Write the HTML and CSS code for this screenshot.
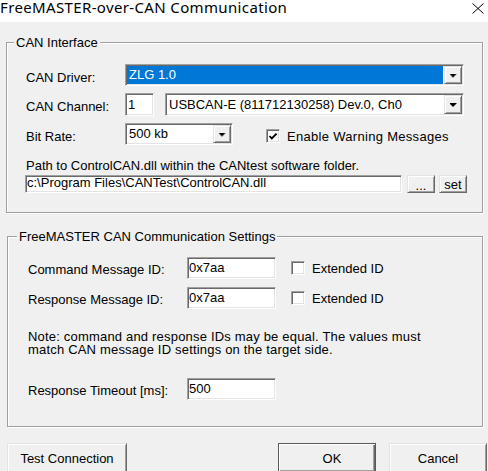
FILE: index.html
```html
<!DOCTYPE html>
<html>
<head>
<meta charset="utf-8">
<title>FreeMASTER-over-CAN Communication</title>
<link rel="stylesheet" href="styles.css">
</head>
<body>
<div class="window">
  <header class="titlebar">
    <span class="title">FreeMASTER-over-CAN Communication</span>
    <svg class="close" width="12" height="11" viewBox="0 0 12 11"><path d="M0.5 0.5 L11.5 10.5 M11.5 0.5 L0.5 10.5" stroke="#000" stroke-width="1" fill="none"/></svg>
  </header>

  <main class="content">
    <fieldset class="group g1">
      <legend>CAN Interface</legend>
      <div class="gbody">
        <div class="row r-driver">
          <span class="lbl">CAN Driver:</span>
          <div class="combo sunken combo-driver sel">
            <span class="field">ZLG 1.0</span>
            <span class="ddbtn raised"><i class="arrow"></i></span>
          </div>
        </div>
        <div class="row r-channel">
          <span class="lbl">CAN Channel:</span>
          <div class="edit sunken edit-ch">1</div>
          <div class="combo sunken combo-dev">
            <span class="field">USBCAN-E (811712130258) Dev.0, Ch0</span>
            <span class="ddbtn raised"><i class="arrow"></i></span>
          </div>
        </div>
        <div class="row r-bit">
          <span class="lbl">Bit Rate:</span>
          <div class="combo sunken combo-bit">
            <span class="field">500 kb</span>
            <span class="ddbtn raised"><i class="arrow"></i></span>
          </div>
          <span class="check sunken checked"><svg width="8" height="7" viewBox="0 0 8 7"><path d="M0.5 3 L2.8 5.4 L7.5 0.6" stroke="#000" stroke-width="1.8" fill="none"/></svg></span>
          <span class="chklbl chk-warn">Enable Warning Messages</span>
        </div>
        <div class="path-label">Path to ControlCAN.dll within the CANtest software folder.</div>
        <div class="row r-path">
          <div class="edit sunken edit-path">c:\Program Files\CANTest\ControlCAN.dll</div>
          <button class="btn raised btn-browse">...</button>
          <button class="btn raised btn-set">set</button>
        </div>
      </div>
    </fieldset>

    <fieldset class="group g2">
      <legend>FreeMASTER CAN Communication Settings</legend>
      <div class="gbody">
        <div class="row r-cmd">
          <span class="lbl">Command Message ID:</span>
          <div class="edit sunken edit-id">0x7aa</div>
          <span class="check sunken"></span>
          <span class="chklbl">Extended ID</span>
        </div>
        <div class="row r-resp">
          <span class="lbl">Response Message ID:</span>
          <div class="edit sunken edit-id">0x7aa</div>
          <span class="check sunken"></span>
          <span class="chklbl">Extended ID</span>
        </div>
        <p class="note">Note: command and response IDs may be equal. The values must<br>match CAN message ID settings on the target side.</p>
        <div class="row r-timeout">
          <span class="lbl">Response Timeout [ms]:</span>
          <div class="edit sunken edit-id">500</div>
        </div>
      </div>
    </fieldset>

    <div class="actions">
      <button class="btn raised btn-big btn-test">Test Connection</button>
      <button class="btn raised btn-big btn-ok">OK</button>
      <button class="btn raised btn-big btn-cancel">Cancel</button>
    </div>
  </main>
</div>
</body>
</html>
```
FILE: styles.css
```css
* { box-sizing: border-box; }
html, body { margin: 0; padding: 0; }
body {
  width: 488px;
  height: 471px;
  overflow: hidden;
  background: #f0f0f0;
  font-family: "Liberation Sans", Arial, sans-serif;
  font-size: 13px;
  color: #000;
}

.titlebar {
  height: 22px;
  background: #fff;
  display: flex;
  justify-content: space-between;
  align-items: flex-start;
}
.title {
  font-family: "Noto Sans", sans-serif;
  font-size: 15px;
  line-height: 17px;
  margin-top: -1px;
  letter-spacing: 0.36px;
  white-space: nowrap;
}
.close { margin: 3px 4px 0 0; display: block; }

/* group boxes (etched frame) */
.group {
  margin: 0;
  padding: 0;
  min-width: 0;
  border: 1px solid #a0a0a0;
  box-shadow: 1px 1px 0 #fff, inset 1px 1px 0 #fff;
}
.group legend {
  padding: 0 2px;
  line-height: 13px;
  background: #f0f0f0;
}
.g1 { margin: 14px 0 0 6px; width: 477px; }
.g1 legend { margin-left: 7px; }
.g1 .gbody { padding: 15px 0 19px 19px; }

.g2 { margin: 17px 0 0 7px; width: 476px; }
.g2 legend { margin-left: 9px; }
.g2 .gbody { padding: 14px 0 26px 20px; }

.row { display: flex; align-items: flex-start; }
.lbl { line-height: 15px; padding-top: 6px; white-space: nowrap; }
.g1 .lbl { width: 99px; }
.g2 .lbl { width: 159px; padding-top: 5px; }

/* 3D borders */
.sunken {
  background: #fff;
  border: 1px solid;
  border-color: #a0a0a0 #fff #fff #a0a0a0;
  box-shadow: inset 1px 1px 0 #696969, inset -1px -1px 0 #e3e3e3;
}
.raised {
  background: #f0f0f0;
  border: 1px solid;
  border-color: #e3e3e3 #696969 #696969 #e3e3e3;
  box-shadow: inset 1px 1px 0 #fff, inset -1px -1px 0 #a0a0a0;
}

/* combo boxes */
.combo { display: flex; height: 22px; padding: 1px; }
.field {
  flex: 1;
  padding-left: 2px;
  line-height: 18px;
  white-space: nowrap;
  overflow: hidden;
}
.sel .field { background: #0078d7; color: #fff; margin-right: 1px; }
.ddbtn {
  width: 18px;
  display: flex;
  align-items: center;
  justify-content: center;
}
.arrow {
  display: block;
  width: 7px;
  height: 4px;
  background: #000;
  clip-path: polygon(0 0, 7px 0, 7px 1px, 6px 1px, 6px 2px, 5px 2px, 5px 3px, 4px 3px, 4px 4px, 3px 4px, 3px 3px, 2px 3px, 2px 2px, 1px 2px, 1px 1px, 0 1px);
  margin-top: 1px;
}
.combo-driver { width: 339px; }
.r-channel { margin-top: 7px; }
.combo-dev { width: 299px; height: 23px; margin-left: 11px; }
.combo-dev .field { line-height: 19px; }
.r-bit { margin-top: 7px; }
.combo-bit { width: 108px; }

/* edits */
.edit { padding: 1px; white-space: nowrap; overflow: hidden; }
.edit-ch { width: 29px; height: 23px; line-height: 19px; padding-left: 2px; }
.edit-id { width: 89px; height: 22px; line-height: 18px; }
.edit-path { width: 377px; height: 18px; line-height: 11px; margin-left: -1px; }

/* check boxes */
.check {
  width: 14px;
  height: 14px;
  display: flex;
  align-items: center;
  justify-content: center;
}
.r-bit .check { margin: 6px 0 0 33px; }
.chklbl { line-height: 15px; padding-top: 6px; margin-left: 7px; white-space: nowrap; }
.chk-warn { letter-spacing: 0.3px; }
.g2 .check { margin: 4px 0 0 15px; }
.g2 .chklbl { padding-top: 4px; }

.path-label { margin-top: 13px; line-height: 15px; white-space: nowrap; }
.r-path { margin-top: 2px; }

/* buttons */
.btn {
  font: inherit;
  color: #000;
  padding: 0;
  margin: 0;
  border-radius: 0;
}
.btn-browse { width: 28px; height: 18px; margin-left: 5px; line-height: 20px; }
.btn-set { width: 28px; height: 18px; margin-left: 4px; line-height: 18px; }

.g2 .r-resp { margin-top: 8px; }
.note { margin: 21px 0 0 0; line-height: 13px; letter-spacing: 0.19px; white-space: nowrap; }
.r-timeout { margin-top: 22px; }

.actions {
  display: flex;
  margin-top: 16px;
  padding: 0 1px 0 7px;
}
.btn-big { height: 30px; width: 98px; line-height: 15px; }
.btn-test { width: 120px; }
.btn-ok {
  margin-left: auto;
  padding-left: 10px;
  border-color: #5a5a5a;
  box-shadow: inset 1px 1px 0 #fff, inset -1px -1px 0 #696969, inset -2px -2px 0 #a0a0a0;
}
.btn-cancel { margin-left: 13px; }
```
